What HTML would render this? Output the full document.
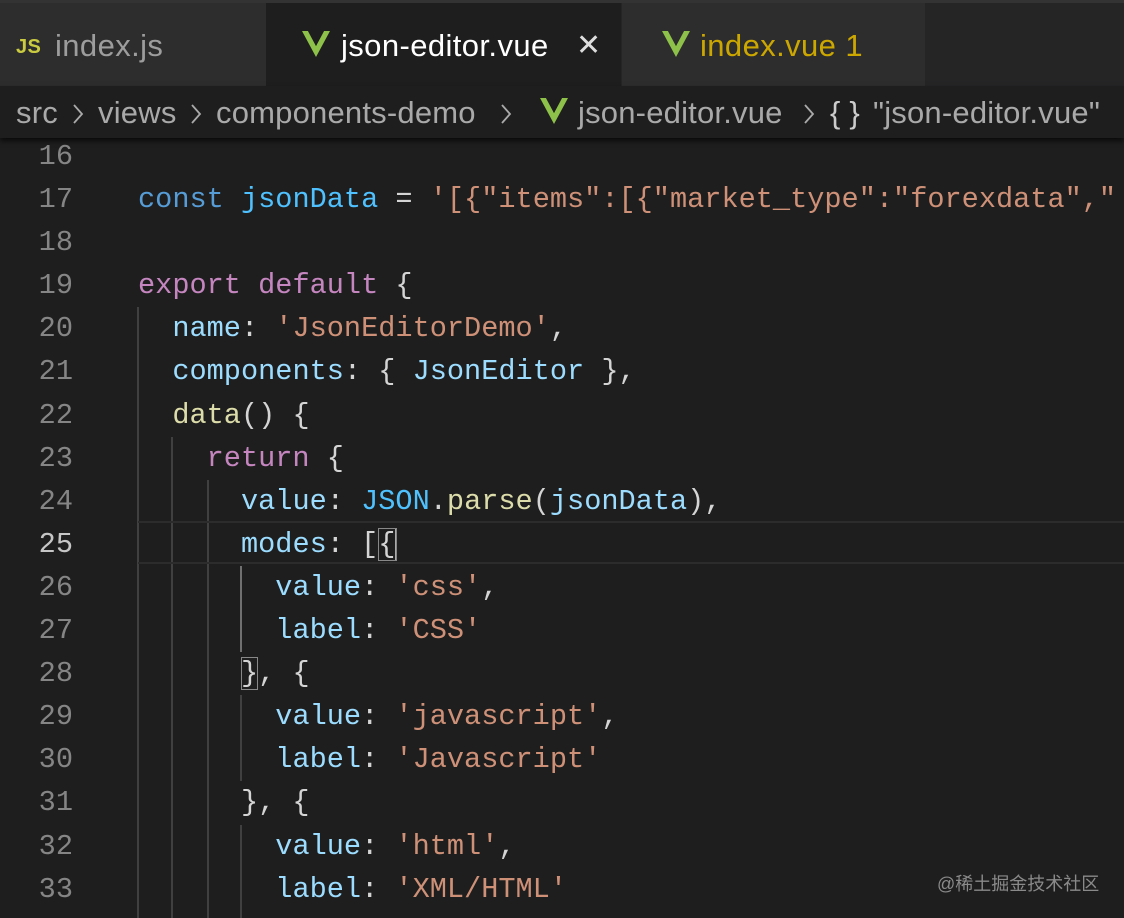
<!DOCTYPE html>
<html><head><meta charset="utf-8"><style>
*{margin:0;padding:0;box-sizing:border-box}
html,body{width:1124px;height:918px;overflow:hidden}
body{background:#1e1e1e;position:relative;font-family:"Liberation Sans",sans-serif}
.tabs{position:absolute;left:0;top:0;width:1124px;height:86px;background:#252526;border-top:3px solid #333;overflow:hidden}
.tab{position:absolute;top:0;height:83px;font-size:31px;line-height:86px;letter-spacing:0.4px;overflow:hidden}
.crumb{position:absolute;left:0;top:86px;width:1124px;height:52px;background:#1e1e1e;color:#a9a9a9;font-size:31px;line-height:54px;z-index:3;box-shadow:0 3px 5px #000a;white-space:nowrap;letter-spacing:0.2px;overflow:hidden}
.crumb span{position:absolute}
.crumb svg{position:absolute;top:17px}
.code{position:absolute;left:0;top:135px;width:1124px;height:783px;overflow:hidden;font-family:"Liberation Mono",monospace;font-size:28.6px;color:#d4d4d4}
.l{position:relative;height:43.1px;line-height:43.1px;white-space:pre}
.n{position:absolute;right:1051px;color:#858585;text-align:right}
.t{position:absolute;left:138px}
.g{position:absolute;top:0;width:2px;background:#404040}
.k{color:#569cd6}.c{color:#4fc1ff}.p{color:#9cdcfe}.s{color:#ce9178}.m{color:#c586c0}.f{color:#dcdcaa}
</style></head><body>
<div class="tabs">
 <div class="tab" style="left:0;width:266px;background:#2d2d2d"><span style="position:absolute;left:16px;color:#cbcb41;font-size:20px;font-weight:bold;top:1px">JS</span><span style="position:absolute;left:55px;color:#9d9d9d">index.js</span></div>
 <div class="tab" style="left:266px;width:355px;background:#1e1e1e"><svg style="position:absolute;left:36px;top:28px" width="28" height="26" viewBox="0 0 28 26"><path d="M0 0h6l8 15 8-15h6L14 26z" fill="#8dc149"/><path d="M6 0h5l3 6 3-6h5l-8 15z" fill="#1e1e1e"/></svg><span style="position:absolute;left:75px;color:#fff">json-editor.vue</span><span style="position:absolute;left:310px;color:#ddd;font-size:30px">✕</span></div>
 <div class="tab" style="left:622px;width:303px;background:#2d2d2d"><svg style="position:absolute;left:40px;top:28px" width="28" height="26" viewBox="0 0 28 26"><path d="M0 0h6l8 15 8-15h6L14 26z" fill="#8dc149"/><path d="M6 0h5l3 6 3-6h5l-8 15z" fill="#2d2d2d"/></svg><span style="position:absolute;left:78px;color:#cca700">index.vue 1</span></div>
</div>
<div class="crumb">
<span style="left:16px">src</span><svg style="left:72px" width="12" height="22" viewBox="0 0 12 22"><path d="M2 2l8 9-8 9" stroke="#aaa" stroke-width="1.8" fill="none"/></svg>
<span style="left:98px">views</span><svg style="left:190px" width="12" height="22" viewBox="0 0 12 22"><path d="M2 2l8 9-8 9" stroke="#aaa" stroke-width="1.8" fill="none"/></svg>
<span style="left:216px">components-demo</span><svg style="left:500px" width="12" height="22" viewBox="0 0 12 22"><path d="M2 2l8 9-8 9" stroke="#aaa" stroke-width="1.8" fill="none"/></svg>
<svg style="left:540px;top:12px" width="28" height="26" viewBox="0 0 28 26"><path d="M0 0h6l8 15 8-15h6L14 26z" fill="#8dc149"/><path d="M6 0h5l3 6 3-6h5l-8 15z" fill="#1e1e1e"/></svg>
<span style="left:578px">json-editor.vue</span><svg style="left:803px" width="12" height="22" viewBox="0 0 12 22"><path d="M2 2l8 9-8 9" stroke="#aaa" stroke-width="1.8" fill="none"/></svg>
<span style="left:830px;color:#ccc">{ }</span>
<span style="left:873px">"json-editor.vue"</span>
</div>
<div class="code">
<div class="g" style="left:137px;top:172px;height:620px"></div>
<div class="g" style="left:171px;top:302px;height:490px"></div>
<div class="g" style="left:207px;top:345px;height:440px"></div>
<div class="g" style="left:240px;top:431px;height:86px;background:#707070"></div>
<div class="g" style="left:240px;top:560px;height:86px"></div>
<div class="g" style="left:240px;top:690px;height:93px"></div>
<div style="position:absolute;left:138px;top:386px;width:986px;height:43px;border-top:2px solid #2c2c2c;border-bottom:2px solid #2c2c2c"></div>
<div class="l"><span class="n">16</span></div>
<div class="l"><span class="n">17</span><span class="t"><span class="k">const</span> <span class="c">jsonData</span> = <span class="s">'[{"items":[{"market_type":"forexdata","</span></span></div>
<div class="l"><span class="n">18</span></div>
<div class="l"><span class="n">19</span><span class="t"><span class="m">export</span> <span class="m">default</span> {</span></div>
<div class="l"><span class="n">20</span><span class="t">  <span class="p">name</span>: <span class="s">'JsonEditorDemo'</span>,</span></div>
<div class="l"><span class="n">21</span><span class="t">  <span class="p">components</span>: { <span class="p">JsonEditor</span> },</span></div>
<div class="l"><span class="n">22</span><span class="t">  <span class="f">data</span>() {</span></div>
<div class="l"><span class="n">23</span><span class="t">    <span class="m">return</span> {</span></div>
<div class="l"><span class="n">24</span><span class="t">      <span class="p">value</span>: <span class="c">JSON</span>.<span class="f">parse</span>(<span class="p">jsonData</span>),</span></div>
<div class="l"><span class="n" style="color:#c6c6c6">25</span><span class="t">      <span class="p">modes</span>: [<span style="outline:1px solid #888;outline-offset:-1px;border-right:2px solid #aaa">{</span></span></div>
<div class="l"><span class="n">26</span><span class="t">        <span class="p">value</span>: <span class="s">'css'</span>,</span></div>
<div class="l"><span class="n">27</span><span class="t">        <span class="p">label</span>: <span class="s">'CSS'</span></span></div>
<div class="l"><span class="n">28</span><span class="t">      <span style="outline:1px solid #888;outline-offset:-1px">}</span>, {</span></div>
<div class="l"><span class="n">29</span><span class="t">        <span class="p">value</span>: <span class="s">'javascript'</span>,</span></div>
<div class="l"><span class="n">30</span><span class="t">        <span class="p">label</span>: <span class="s">'Javascript'</span></span></div>
<div class="l"><span class="n">31</span><span class="t">      }, {</span></div>
<div class="l"><span class="n">32</span><span class="t">        <span class="p">value</span>: <span class="s">'html'</span>,</span></div>
<div class="l"><span class="n">33</span><span class="t">        <span class="p">label</span>: <span class="s">'XML/HTML'</span></span></div>
</div>
<div style="position:absolute;left:937px;top:870px;color:#8a8a8a;font-size:18px;font-family:'Liberation Sans','Noto Sans CJK SC',sans-serif">@稀土掘金技术社区</div>
</body></html>
